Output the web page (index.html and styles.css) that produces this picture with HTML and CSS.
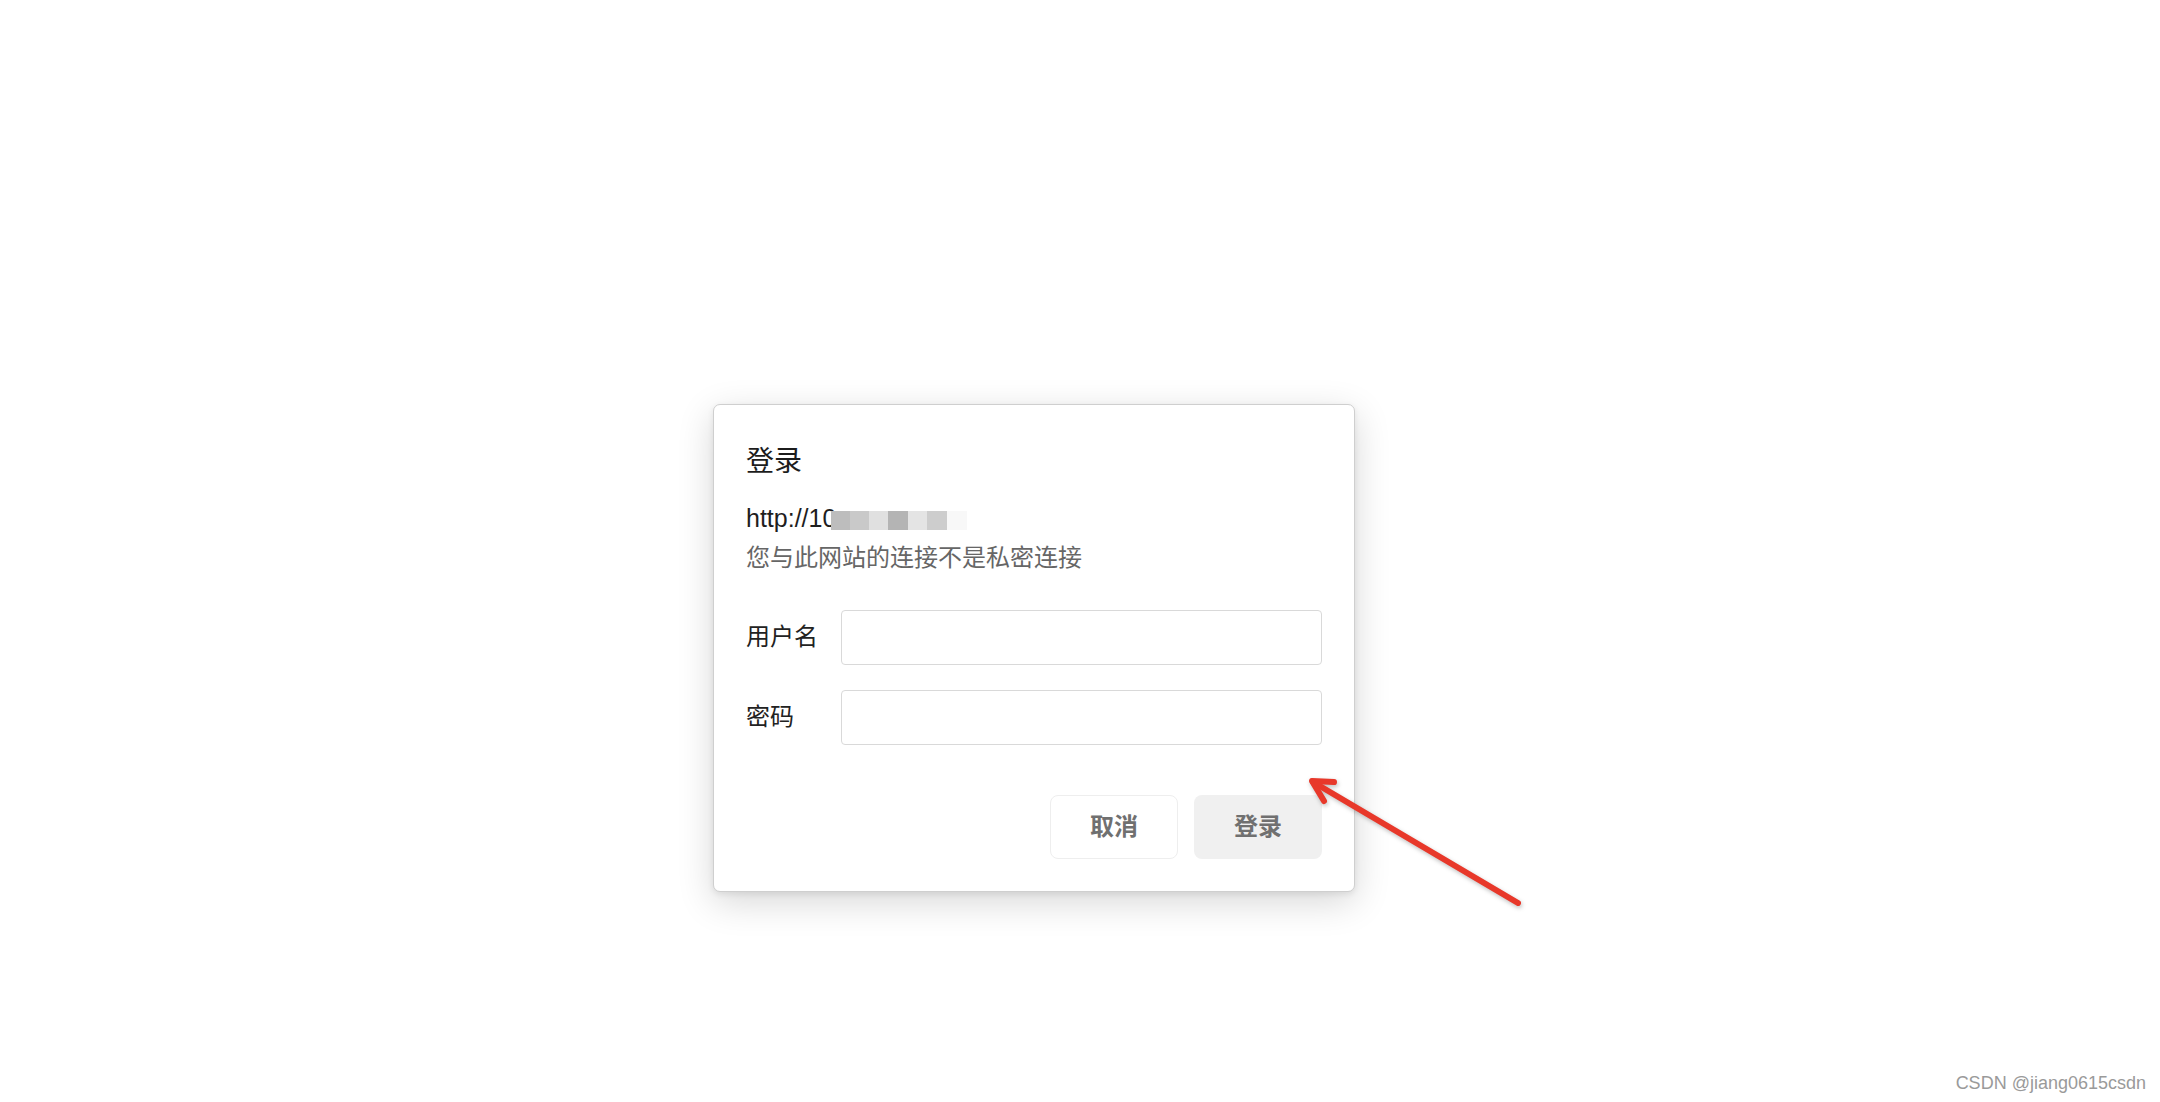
FILE: index.html
```html
<!DOCTYPE html>
<html lang="zh-CN">

<head>
    <meta charset="UTF-8">
    <meta name="viewport" content="width=device-width, initial-scale=1.0">
    <title>登录</title>
    <link rel="stylesheet" href="styles.css">
</head>

<body>
    <div class="page">
        <div class="dialog">
            <h1 class="dialog-title">登录</h1>
            <p class="dialog-url">http://10<span class="mosaic"><i class="m1"></i><i class="m2"></i><i class="m3"></i><i class="m4"></i><i class="m5"></i><i class="m6"></i></span></p>
            <p class="dialog-note">您与此网站的连接不是私密连接</p>

            <div class="form">
                <div class="form-row">
                    <label class="form-label">用户名</label>
                    <input class="form-input" type="text">
                </div>
                <div class="form-row">
                    <label class="form-label">密码</label>
                    <input class="form-input" type="password">
                </div>
            </div>

            <div class="actions">
                <button class="btn btn-cancel">取消</button>
                <button class="btn btn-login">登录</button>
            </div>
        </div>
    </div>

    <!-- red annotation arrow drawn over the page -->
    <svg class="arrow" width="260" height="160" viewBox="0 0 260 160">
        <g fill="none" stroke="#e8382a" stroke-width="6" stroke-linecap="round" stroke-linejoin="round">
            <path d="M238 143 L33 22" />
            <path d="M54 22 L32 21 L44 41" />
        </g>
    </svg>

    <div class="watermark">CSDN @jiang0615csdn</div>
</body>

</html>
```

FILE: styles.css
```css
html,
body {
    margin: 0;
    padding: 0;
    height: 100%;
}

body {
    background-color: #ffffff;
    font-family: "Liberation Sans", "Noto Sans CJK SC", sans-serif;
    color: #222222;
    position: relative;
    overflow: hidden;
}

.page {
    padding-top: 405px;
    padding-left: 714px;
}

.dialog {
    width: 576px;
    padding: 32px;
    background: #ffffff;
    border: 1px solid #cfcfcf;
    border-radius: 7px;
    box-shadow: 0 10px 36px rgba(0, 0, 0, 0.16), 0 2px 6px rgba(0, 0, 0, 0.08);
    margin-left: -1px;
    margin-top: -1px;
}

.dialog-title {
    margin: 0;
    font-size: 28px;
    line-height: 44px;
    font-weight: 400;
    color: #1c1c1c;
    font-family: "Noto Sans CJK SC", sans-serif;
    padding-bottom: 2px;
    margin-bottom: -2px;
}

.dialog-url {
    margin: 18px 0 0;
    font-size: 25px;
    line-height: 38px;
    color: #1e1e1e;
    display: flex;
    align-items: center;
}

/* pixelated blur hiding the host part of the address */
.mosaic {
    display: flex;
    height: 19px;
    margin-top: 5px;
    margin-left: -5px;
    padding-right: 20px;
    background: #f8f8f8;
}

.mosaic i {
    display: block;
    width: 19px;
    height: 19px;
}

.mosaic .m1 { background: #bdbdbd; }
.mosaic .m2 { background: #c9c9c9; }
.mosaic .m3 { background: #e0e0e0; }
.mosaic .m4 { background: #b4b4b4; width: 20px; }
.mosaic .m5 { background: #e4e4e4; }
.mosaic .m6 { background: #cdcdcd; width: 20px; }

.dialog-note {
    margin: 0;
    font-size: 24px;
    line-height: 38px;
    color: #666666;
    font-family: "Noto Sans CJK SC", sans-serif;
}

.form {
    margin-top: 35px;
    display: flex;
    flex-direction: column;
    gap: 25px;
}

.form-row {
    display: flex;
    align-items: center;
}

.form-label {
    width: 95px;
    flex-shrink: 0;
    font-size: 24px;
    line-height: 34px;
    padding-bottom: 5px;
    color: #222222;
    font-family: "Noto Sans CJK SC", sans-serif;
}

.form-input {
    flex: 1;
    height: 55px;
    margin: 0;
    box-sizing: border-box;
    border: 1px solid #d9d9d9;
    border-radius: 4px;
    background: #ffffff;
    font-size: 22px;
    padding: 0 12px;
    outline: none;
}

.actions {
    margin-top: 50px;
    display: flex;
    justify-content: flex-end;
    gap: 16px;
}

.btn {
    width: 128px;
    height: 64px;
    padding: 0 0 5px;
    border-radius: 8px;
    font-family: "Noto Sans CJK SC", sans-serif;
    font-size: 24px;
    font-weight: 700;
    color: #707070;
    cursor: pointer;
}

.btn-cancel {
    background: #ffffff;
    border: 1px solid #eeeeee;
}

.btn-login {
    background: #f0f0f0;
    border: none;
}

.arrow {
    position: absolute;
    left: 1280px;
    top: 760px;
    filter: drop-shadow(1px 2px 2px rgba(0, 0, 0, 0.25));
}

.watermark {
    position: absolute;
    right: 14px;
    bottom: 8px;
    font-size: 18px;
    color: #9a9a9a;
    font-family: "Liberation Sans", sans-serif;
}
```
